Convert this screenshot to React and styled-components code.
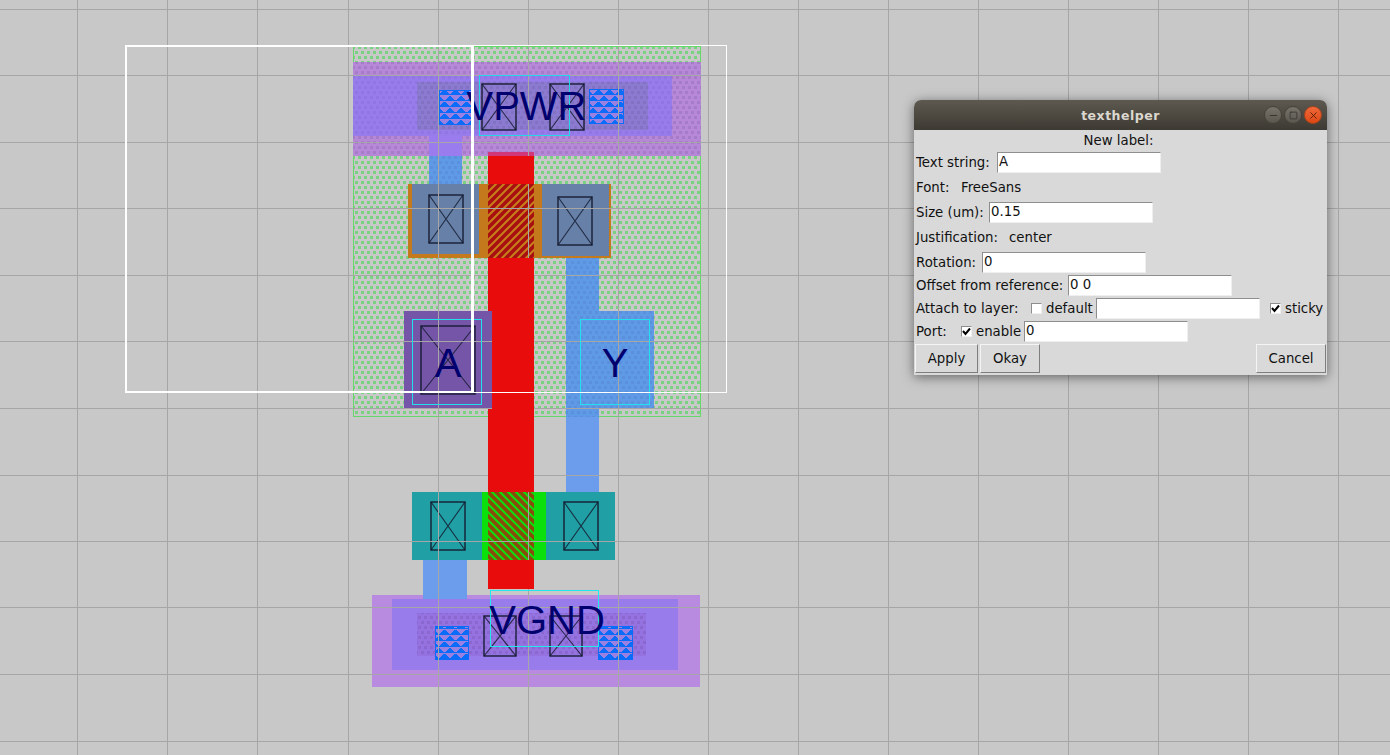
import React from 'react';
import styled, { createGlobalStyle } from 'styled-components';
import { Minus, Square, X } from 'lucide-react';

const Global = createGlobalStyle`
html, body {
  margin: 0;
  padding: 0;
  background: #c8c8c8;
}
`

const Page = styled.div`
position: relative;
width: 1390px;
height: 755px;
overflow: hidden;
background: #c8c8c8;
`

const Canvas = styled.svg`
display: block;
`

const Label = styled.text`
font-family: "Liberation Sans", Arial, sans-serif;
font-size: 40px;
fill: #00006e;
text-anchor: middle;
`

const Dialog = styled.div`
position: absolute;
left: 914px;
top: 100px;
width: 413px;
height: 275px;
display: flex;
flex-direction: column;
background: #d9d9d9;
border-radius: 7px 7px 0 0;
box-shadow: 0 2px 12px rgba(0, 0, 0, 0.5);
font-family: "DejaVu Sans", sans-serif;
font-size: 13.3px;
color: #111;
`

const TitleBar = styled.div`
position: relative;
height: 30px;
flex: none;
display: flex;
align-items: center;
justify-content: center;
background: linear-gradient(#5d5950, #3d3a33);
border-radius: 7px 7px 0 0;
`

const Title = styled.span`
font-family: "DejaVu Sans", sans-serif;
font-weight: bold;
font-size: 12.5px;
letter-spacing: 0.5px;
color: #dcd8cf;
`

const WinButtons = styled.div`
position: absolute;
right: 5px;
top: 6px;
display: flex;
gap: 2px;
`

const WinButton = styled.span`
width: 16px;
height: 16px;
border-radius: 50%;
display: flex;
align-items: center;
justify-content: center;
background: ${p => p.$close ? 'linear-gradient(#f0683a, #dd4814)' : 'linear-gradient(#77736a, #5a574f)'};
border: 1px solid ${p => p.$close ? '#a8441c' : '#45423b'};
color: ${p => p.$close ? '#5a2008' : '#33312c'};
`

const Row = styled.div`
height: ${p => p.$h}px;
flex: none;
display: flex;
align-items: center;
justify-content: ${p => p.$center ? 'center' : 'flex-start'};
padding: ${p => p.$center ? '0 4px 0 0' : '0 0 0 2px'};
white-space: nowrap;
`

const Text = styled.span`
width: ${p => p.$w ? p.$w + 'px' : 'auto'};
flex: none;
`

const Entry = styled.div`
width: 164px;
height: 21px;
box-sizing: border-box;
flex: none;
background: #fff;
border: 1px solid;
border-color: #8e8e8e #efefef #efefef #8e8e8e;
padding: 0 1px;
line-height: 18px;
`

const Check = styled.span`
width: 11px;
height: 11px;
flex: none;
box-sizing: border-box;
display: flex;
background: #fff;
border: 1px solid;
border-color: #8e8e8e #efefef #efefef #8e8e8e;
margin-right: 4px;
`

const ButtonRow = styled.div`
flex: none;
display: flex;
gap: 2px;
padding: 1px 1px 0;
`

const Button = styled.div`
width: ${p => p.$w}px;
height: 29px;
box-sizing: border-box;
flex: none;
display: flex;
align-items: center;
justify-content: center;
border: 1px solid;
border-color: #f4f4f4 #7e7e7e #7e7e7e #f4f4f4;
margin-left: ${p => p.$push ? 'auto' : 0};
`

const gridX = [77, 167, 257, 348, 438, 528, 618, 708, 798, 888, 978, 1068, 1158, 1248, 1338];
const gridY = [9, 75, 142, 208, 275, 341, 408, 475, 541, 607, 674, 741];

// poly stays solid over the grid everywhere except the two gates
const polySegments = [
    [488, 156, 534, 184],
    [488, 258, 534, 311],
    [492, 311, 534, 409],
    [488, 409, 534, 492],
    [488, 560, 534, 589],
];

function Box({ x1, y1, x2, y2, fill, stroke, sw }) {
    return <rect x={x1} y={y1} width={x2 - x1} height={y2 - y1} fill={fill || 'none'} stroke={stroke} strokeWidth={sw} shapeRendering="crispEdges" />;
}

function Contact({ x1, y1, x2, y2 }) {
    return (
        <g stroke="#141a30" fill="none">
            <path d={`M${x1} ${y1}L${x2} ${y2}M${x2} ${y1}L${x1} ${y2}`} strokeWidth="1.1" opacity="0.85" />
            <rect x={x1} y={y1} width={x2 - x1} height={y2 - y1} strokeWidth="1.5" opacity="0.9" />
        </g>
    );
}

function Dots({ id, bg, dot }) {
    return (
        <pattern id={id} width="6" height="10" patternUnits="userSpaceOnUse">
            <rect width="6" height="10" fill={bg} />
            <g fill={dot} shapeRendering="crispEdges">
                <rect x="1" y="1" width="3" height="3" />
                <rect x="4" y="6" width="2" height="3" />
                <rect x="0" y="6" width="1" height="3" />
            </g>
        </pattern>
    );
}

function Patterns() {
    return (
        <defs>
            <Dots id="nwell" bg="#c8c8c8" dot="#78d282" />
            <Dots id="met" bg="#b888d8" dot="#a47cc8" />
            <Dots id="metIn" bg="#987cec" dot="#9076e2" />
            <Dots id="liTop" bg="#8b7ad0" dot="#8272c4" />
            <Dots id="liBottom" bg="#9472e0" dot="#8a68d0" />
            <Dots id="blueOver" bg="#5f9ae6" dot="#5a90dc" />
            <pattern id="mcon" width="11" height="12" patternUnits="userSpaceOnUse" x="439" y="90">
                <rect width="11" height="12" fill="#9a80e0" />
                <g fill="#0c6cfa" shapeRendering="crispEdges">
                    <rect x="4" y="0" width="3" height="1" />
                    <rect x="3" y="1" width="5" height="1" />
                    <rect x="2" y="2" width="7" height="1" />
                    <rect x="1" y="3" width="9" height="1" />
                    <rect x="0" y="4" width="11" height="1" />
                    <rect x="0" y="6" width="1" height="1" /><rect x="10" y="6" width="1" height="1" />
                    <rect x="0" y="7" width="2" height="1" /><rect x="9" y="7" width="2" height="1" />
                    <rect x="0" y="8" width="3" height="1" /><rect x="8" y="8" width="3" height="1" />
                    <rect x="0" y="9" width="4" height="1" /><rect x="7" y="9" width="4" height="1" />
                    <rect x="0" y="10" width="11" height="1" />
                </g>
            </pattern>
            <pattern id="hatchP" width="8" height="8" patternUnits="userSpaceOnUse">
                <rect width="8" height="8" fill="#a81010" />
                <path d="M-2 10L10 -2M-2 2L2 -2M6 10L10 6" stroke="#c97e1c" strokeWidth="2" />
            </pattern>
            <pattern id="hatchN" width="8" height="8" patternUnits="userSpaceOnUse">
                <rect width="8" height="8" fill="#8a4a0c" />
                <path d="M-2 -2L10 10M6 -2L10 2M-2 6L2 10" stroke="#0ce00c" strokeWidth="2" />
            </pattern>
        </defs>
    );
}

function CheckMark() {
    return (
        <svg width="9" height="9" viewBox="0 0 9 9">
            <path d="M1 4L3.5 7L8 1.5" fill="none" stroke="#000" strokeWidth="2" />
        </svg>
    );
}

export default function App() {
    return (
        <Page>
            <Global />
            <Canvas width="1390" height="755">
                <Patterns />

                {/* nwell */}
                <Box x1={353.5} y1={46.5} x2={700.5} y2={416.5} fill="url(#nwell)" stroke="#66d86a" sw={1} />

                {/* pfet */}
                <Box x1={408} y1={184} x2={611} y2={258} fill="#c47a1c" />
                <Box x1={412} y1={184} x2={479} y2={254} fill="#6680a8" />
                <Box x1={542} y1={184} x2={609} y2={256} fill="#6680a8" />

                {/* poly */}
                <Box x1={488} y1={152} x2={534} y2={589} fill="#e80c0c" />
                <Box x1={488} y1={184} x2={534} y2={258} fill="url(#hatchP)" />

                {/* power rail */}
                <Box x1={353} y1={62} x2={701} y2={156} fill="url(#met)" />
                <Box x1={353} y1={75} x2={672} y2={136} fill="url(#metIn)" />
                <Box x1={417} y1={82} x2={648} y2={130} fill="url(#liTop)" />
                <Box x1={429} y1={136} x2={462} y2={156} fill="#9a7cee" />
                <Box x1={429} y1={156} x2={462} y2={184} fill="url(#blueOver)" />
                <Box x1={488} y1={152} x2={534} y2={156} fill="#d0387a" />
                <Box x1={439} y1={90} x2={472} y2={124} fill="url(#mcon)" stroke="#0c6cfa" sw={1} />
                <Box x1={589} y1={89} x2={623} y2={123} fill="url(#mcon)" stroke="#0c6cfa" sw={1} />

                {/* output strap */}
                <Box x1={566} y1={258} x2={599} y2={417} fill="url(#blueOver)" />
                <Box x1={566} y1={311} x2={654} y2={409} fill="url(#blueOver)" />
                <Box x1={566} y1={417} x2={599} y2={492} fill="#6c9cec" />

                {/* input pad */}
                <Box x1={404} y1={311} x2={492} y2={409} fill="#7455a8" />

                {/* nfet */}
                <Box x1={482} y1={492} x2={546} y2={560} fill="#0ce00c" />
                <Box x1={412} y1={492} x2={482} y2={560} fill="#20a0a4" />
                <Box x1={546} y1={492} x2={615} y2={560} fill="#20a0a4" />
                <Box x1={488} y1={492} x2={534} y2={560} fill="url(#hatchN)" />

                {/* ground rail */}
                <Box x1={423} y1={560} x2={467} y2={599} fill="#6c9cec" />
                <Box x1={372} y1={595} x2={700} y2={687} fill="#b88ae0" />
                <Box x1={423} y1={595} x2={467} y2={599} fill="#6c9cec" />
                <Box x1={392} y1={599} x2={678} y2={670} fill="#987cec" />
                <Box x1={417} y1={613} x2={646} y2={656} fill="url(#liBottom)" />
                <Box x1={435} y1={626} x2={468} y2={659} fill="url(#mcon)" stroke="#0c6cfa" sw={1} />
                <Box x1={598} y1={626} x2={632} y2={659} fill="url(#mcon)" stroke="#0c6cfa" sw={1} />

                {/* contacts */}
                <Contact x1={482} y1={84} x2={516} y2={130} />
                <Contact x1={550} y1={84} x2={584} y2={130} />
                <Contact x1={429} y1={195} x2={463} y2={243} />
                <Contact x1={558} y1={197} x2={592} y2={245} />
                <Contact x1={421} y1={326} x2={475} y2={394} />
                <Contact x1={431} y1={502} x2={465} y2={550} />
                <Contact x1={564} y1={502} x2={598} y2={550} />
                <Contact x1={484} y1={616} x2={516} y2={656} />
                <Contact x1={550} y1={616} x2={582} y2={656} />

                {/* grid */}
                <g stroke="#a6a6a6" strokeWidth="1" shapeRendering="crispEdges">
                    {gridX.map(x => <line key={x} x1={x + 0.5} y1="0" x2={x + 0.5} y2="755" />)}
                    {gridY.map(y => <line key={y} x1="0" y1={y + 0.5} x2="1390" y2={y + 0.5} />)}
                </g>
                {polySegments.map(([x1, y1, x2, y2]) => <Box key={y1} x1={x1} y1={y1} x2={x2} y2={y2} fill="#e80c0c" />)}

                {/* labels */}
                <Box x1={479.5} y1={75.5} x2={569.5} y2={135.5} stroke="#22d8e8" sw={1} />
                <Box x1={412.5} y1={319.5} x2={481.5} y2={404.5} stroke="#22e0ee" sw={1} />
                <Box x1={580.5} y1={319.5} x2={649.5} y2={404.5} stroke="#22e0ee" sw={1} />
                <Box x1={490.5} y1={590.5} x2={598.5} y2={646.5} stroke="#22e8ee" sw={1} />
                <Label x="526.5" y="120">VPWR</Label>
                <Label x="448" y="377">A</Label>
                <Label x="615" y="377">Y</Label>
                <Label x="547" y="634">VGND</Label>

                {/* boxes */}
                <Box x1={473} y1={45.5} x2={726.5} y2={392.5} stroke="#fff" sw={1} />
                <Box x1={126} y1={46} x2={472} y2={392} stroke="#fff" sw={2} />
            </Canvas>

            <Dialog>
                <TitleBar>
                    <Title>texthelper</Title>
                    <WinButtons>
                        <WinButton><Minus size={11} /></WinButton>
                        <WinButton><Square size={9} /></WinButton>
                        <WinButton $close><X size={11} /></WinButton>
                    </WinButtons>
                </TitleBar>
                <Row $h={20} $center><span>New label:</span></Row>
                <Row $h={24}><Text $w={81}>Text string:</Text><Entry>A</Entry></Row>
                <Row $h={27}><Text $w={45}>Font:</Text><Text>FreeSans</Text></Row>
                <Row $h={23}><Text $w={73}>Size (um):</Text><Entry>0.15</Entry></Row>
                <Row $h={27}><Text $w={93}>Justification:</Text><Text>center</Text></Row>
                <Row $h={22}><Text $w={66}>Rotation:</Text><Entry>0</Entry></Row>
                <Row $h={24}><Text $w={152}>Offset from reference:</Text><Entry>0 0</Entry></Row>
                <Row $h={22}>
                    <Text $w={115}>Attach to layer:</Text>
                    <Check />
                    <Text $w={50}>default</Text>
                    <Entry />
                    <Text $w={10} />
                    <Check><CheckMark /></Check>
                    <Text>sticky</Text>
                </Row>
                <Row $h={24}>
                    <Text $w={45}>Port:</Text>
                    <Check><CheckMark /></Check>
                    <Text $w={48}>enable</Text>
                    <Entry>0</Entry>
                </Row>
                <ButtonRow>
                    <Button $w={63}>Apply</Button>
                    <Button $w={60}>Okay</Button>
                    <Button $w={70} $push>Cancel</Button>
                </ButtonRow>
            </Dialog>
        </Page>
    )
}
